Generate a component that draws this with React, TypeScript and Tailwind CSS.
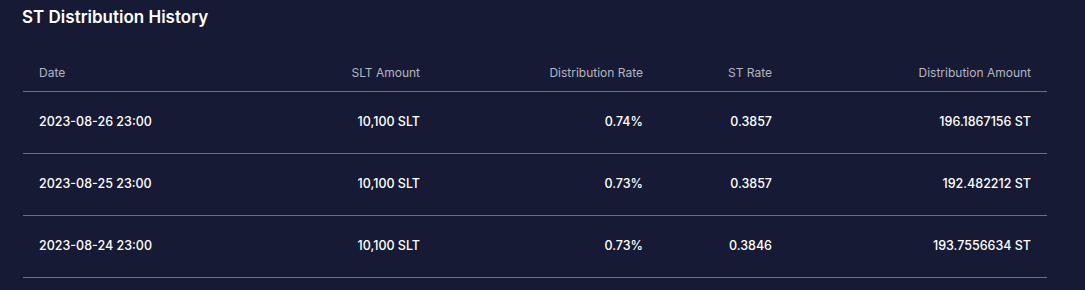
const rows = [
  { date: "2023-08-26 23:00", slt: "10,100 SLT", rate: "0.74%", st: "0.3857", amount: "196.1867156 ST" },
  { date: "2023-08-25 23:00", slt: "10,100 SLT", rate: "0.73%", st: "0.3857", amount: "192.482212 ST" },
  { date: "2023-08-24 23:00", slt: "10,100 SLT", rate: "0.73%", st: "0.3846", amount: "193.7556634 ST" },
];

const cols = "grid grid-cols-[200px_213px_223px_129px_259px]";

const App = () => {
  return (
    <div className="w-[1085px] h-[290px] bg-[#161a35] overflow-hidden font-['Inter',sans-serif] text-white">
      <div className="pl-[22px] pt-[6px]">
        <h2 className="text-[17px] leading-[22px] font-semibold">ST Distribution History</h2>
      </div>

      <div className="ml-[23px] w-[1024px] mt-[26px]">
        {/* header */}
        <div className={`${cols} h-[38px] items-center border-b border-[#6e6e7c] text-[12px] text-[#b4b6c2]`}>
          <div className="pl-4">Date</div>
          <div className="pr-4 text-right">SLT Amount</div>
          <div className="pr-4 text-right">Distribution Rate</div>
          <div className="pr-4 text-right">ST Rate</div>
          <div className="pr-4 text-right">Distribution Amount</div>
        </div>

        {rows.map((r, idx) => (
          <div
            key={idx}
            className={`${cols} h-[62px] items-center border-b border-[#6e6e7c] text-[12.5px] font-medium`}
          >
            <div className="pl-4">{r.date}</div>
            <div className="pr-4 text-right">{r.slt}</div>
            <div className="pr-4 text-right">{r.rate}</div>
            <div className="pr-4 text-right">{r.st}</div>
            <div className="pr-4 text-right">{r.amount}</div>
          </div>
        ))}
      </div>
    </div>
  );
};

export default App;
